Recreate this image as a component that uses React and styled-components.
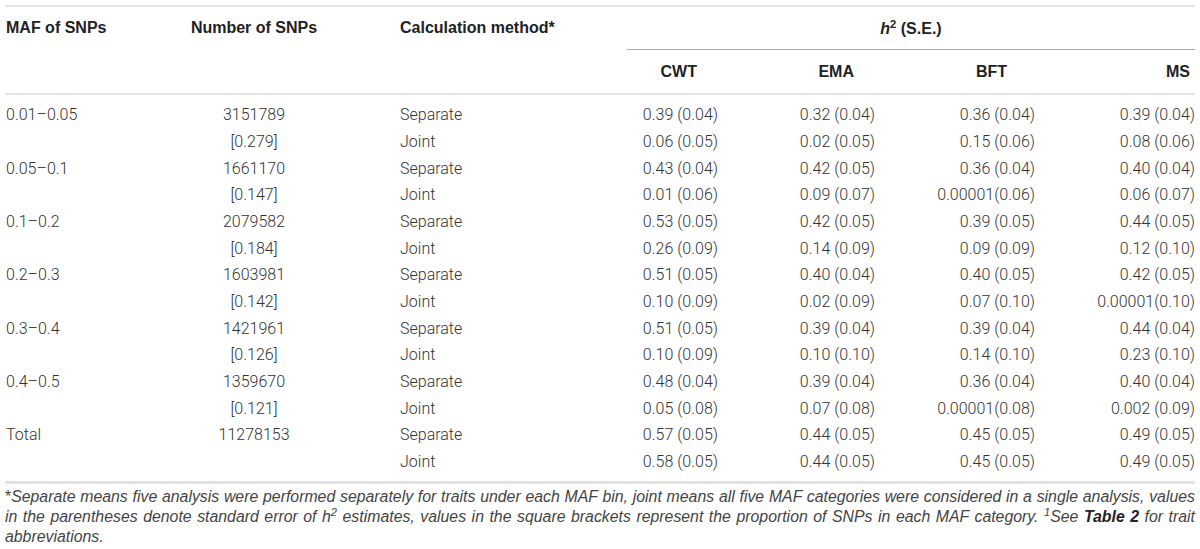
import React from "react";
import styled, { createGlobalStyle } from "styled-components";

const Global = createGlobalStyle`
  html, body { margin: 0; padding: 0; background: #fff; }
  body { font-family: Roboto, "Liberation Sans", Arial, sans-serif; }
`;

const COLS = "125px 248px 249px 131px 157px 160px 120px";

const Wrap = styled.div`
  width: 1190px;
  margin: 5px 0 0 5px;
  color: #333;
`;

const Head = styled.div`
  display: grid;
  grid-template-columns: ${COLS};
  grid-template-rows: 43px 43px;
  border-top: 2px solid #e2e2e2;
  border-bottom: 2px solid #e2e2e2;
`;

const HeadLabel = styled.div`
  grid-column: ${(p) => p.$col};
  grid-row: 1 / span 2;
  font-family: "Liberation Sans", Arial, sans-serif;
  font-weight: 700;
  font-size: 16px;
  color: #222;
  line-height: 20px;
  padding-top: 11px;
  padding-left: ${(p) => p.$pl || 0}px;
  text-align: ${(p) => p.$align || "left"};
`;

const GroupHead = styled.div`
  grid-column: 4 / span 4;
  grid-row: 1;
  display: flex;
  align-items: center;
  justify-content: center;
  border-bottom: 1px solid #a8a8a8;
  font-family: "Liberation Sans", Arial, sans-serif;
  font-weight: 700;
  font-size: 16px;
  color: #222;
`;

const GroupText = styled.span`
  line-height: 20px;
  padding-top: 2px;
`;

const SubHead = styled.div`
  grid-column: ${(p) => p.$col};
  grid-row: 2;
  display: flex;
  align-items: center;
  justify-content: flex-end;
  padding-right: ${(p) => p.$pr}px;
  font-family: "Liberation Sans", Arial, sans-serif;
  font-weight: 700;
  font-size: 16px;
  color: #222;
`;

const Body = styled.div`
  padding: 7px 0 6px;
  border-bottom: 3px solid #e2e2e2;
`;

const Row = styled.div`
  display: grid;
  grid-template-columns: ${COLS};
  height: 26.67px;
  align-items: center;
  font-weight: 300;
  font-size: 16px;
  line-height: 20px;
  color: #333;
`;

const Cell = styled.div`
  text-align: ${(p) => p.$align || "left"};
  padding-left: ${(p) => p.$pl || 0}px;
  padding-right: ${(p) => p.$pr || 0}px;
  white-space: nowrap;
`;

const Note = styled.p`
  margin: 0;
  padding-top: 3px;
  font-family: "Liberation Sans", Arial, sans-serif;
  font-style: italic;
  font-weight: 400;
  font-size: 15.85px;
  line-height: 20px;
  color: #444;
  text-align: justify;
`;

const Star = styled.span`
  font-style: normal;
`;

const Sup = styled.sup`
  font-size: 0.7em;
  line-height: 0;
  vertical-align: 0.5em;
  font-style: ${(p) => (p.$italic ? "italic" : "normal")};
`;

const Strong = styled.b`
  font-weight: 700;
  color: #222;
`;

const rows = [
  ["0.01–0.05", "3151789", "Separate", "0.39 (0.04)", "0.32 (0.04)", "0.36 (0.04)", "0.39 (0.04)"],
  ["", "[0.279]", "Joint", "0.06 (0.05)", "0.02 (0.05)", "0.15 (0.06)", "0.08 (0.06)"],
  ["0.05–0.1", "1661170", "Separate", "0.43 (0.04)", "0.42 (0.05)", "0.36 (0.04)", "0.40 (0.04)"],
  ["", "[0.147]", "Joint", "0.01 (0.06)", "0.09 (0.07)", "0.00001(0.06)", "0.06 (0.07)"],
  ["0.1–0.2", "2079582", "Separate", "0.53 (0.05)", "0.42 (0.05)", "0.39 (0.05)", "0.44 (0.05)"],
  ["", "[0.184]", "Joint", "0.26 (0.09)", "0.14 (0.09)", "0.09 (0.09)", "0.12 (0.10)"],
  ["0.2–0.3", "1603981", "Separate", "0.51 (0.05)", "0.40 (0.04)", "0.40 (0.05)", "0.42 (0.05)"],
  ["", "[0.142]", "Joint", "0.10 (0.09)", "0.02 (0.09)", "0.07 (0.10)", "0.00001(0.10)"],
  ["0.3–0.4", "1421961", "Separate", "0.51 (0.05)", "0.39 (0.04)", "0.39 (0.04)", "0.44 (0.04)"],
  ["", "[0.126]", "Joint", "0.10 (0.09)", "0.10 (0.10)", "0.14 (0.10)", "0.23 (0.10)"],
  ["0.4–0.5", "1359670", "Separate", "0.48 (0.04)", "0.39 (0.04)", "0.36 (0.04)", "0.40 (0.04)"],
  ["", "[0.121]", "Joint", "0.05 (0.08)", "0.07 (0.08)", "0.00001(0.08)", "0.002 (0.09)"],
  ["Total", "11278153", "Separate", "0.57 (0.05)", "0.44 (0.05)", "0.45 (0.05)", "0.49 (0.05)"],
  ["", "", "Joint", "0.58 (0.05)", "0.44 (0.05)", "0.45 (0.05)", "0.49 (0.05)"],
];

const valuePads = [40, 40, 40, 0];

export default function App() {
  return (
    <>
      <Global />
      <Wrap>
        <Head>
          <HeadLabel $col={1} $pl={1}>MAF of SNPs</HeadLabel>
          <HeadLabel $col={2} $align="center">Number of SNPs</HeadLabel>
          <HeadLabel $col={3} $pl={22}>Calculation method*</HeadLabel>
          <GroupHead>
            <GroupText>
              <i>h</i>
              <Sup>2</Sup> (S.E.)
            </GroupText>
          </GroupHead>
          <SubHead $col={4} $pr={61}>CWT</SubHead>
          <SubHead $col={5} $pr={61}>EMA</SubHead>
          <SubHead $col={6} $pr={68}>BFT</SubHead>
          <SubHead $col={7} $pr={5}>MS</SubHead>
        </Head>
        <Body>
          {rows.map((r, i) => (
            <Row key={i}>
              <Cell $pl={1}>{r[0]}</Cell>
              <Cell $align="center">{r[1]}</Cell>
              <Cell $pl={22}>{r[2]}</Cell>
              {r.slice(3).map((v, j) => (
                <Cell key={j} $align="right" $pr={valuePads[j]}>
                  {v}
                </Cell>
              ))}
            </Row>
          ))}
        </Body>
        <Note>
          <Star>*</Star>Separate means five analysis were performed separately for traits under
          each MAF bin, joint means all five MAF categories were considered in a single analysis,
          values in the parentheses denote standard error of h<Sup $italic>2</Sup> estimates,
          values in the square brackets represent the proportion of SNPs in each MAF category.{" "}
          <Sup $italic>1</Sup>See <Strong>Table 2</Strong> for trait abbreviations.
        </Note>
      </Wrap>
    </>
  );
}
